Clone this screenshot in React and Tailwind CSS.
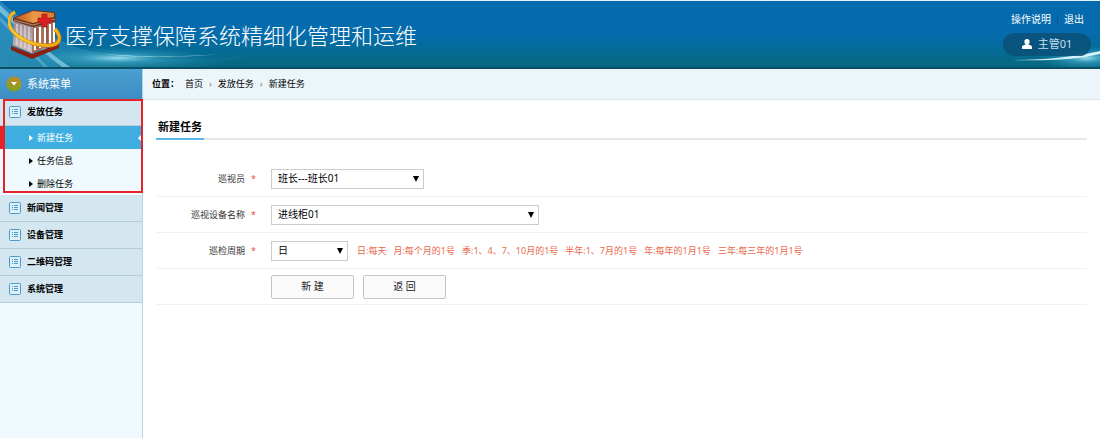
import React, { useState } from 'react';

const menus = [
    { title: '发放任务', children: ['新建任务', '任务信息', '删除任务'] },
    { title: '新闻管理' },
    { title: '设备管理' },
    { title: '二维码管理' },
    { title: '系统管理' }
];

const Logo = () => (
    <svg viewBox="0 0 56 52" className="w-[56px] h-[52px] shrink-0" aria-hidden="true">
        <defs>
            <linearGradient id="roof" x1="0" y1="0" x2="1" y2="0">
                <stop offset="0" stopColor="#b9531c" />
                <stop offset="0.5" stopColor="#ee9a48" />
                <stop offset="1" stopColor="#d97a35" />
            </linearGradient>
            <linearGradient id="wall" x1="0" y1="0" x2="0" y2="1">
                <stop offset="0" stopColor="#9c8a92" />
                <stop offset="1" stopColor="#cfc0c2" />
            </linearGradient>
            <linearGradient id="ring" x1="0" y1="0" x2="1" y2="1">
                <stop offset="0" stopColor="#e5b83a" />
                <stop offset="0.5" stopColor="#fbc926" />
                <stop offset="1" stopColor="#f0a313" />
            </linearGradient>
        </defs>
        {/* base */}
        <path d="M3 38 L24 46 L51 36 V40 L24 51 L3 42 Z" fill="#8a1f12" />
        <path d="M4 37 L24 45 L50 35 L44 32 L8 32 Z" fill="#cf5a34" />
        {/* walls */}
        <path d="M6 13 L25 19 L24 45 L5 37 Z" fill="url(#wall)" />
        <path d="M25 19 L47 13 V35 L24 45 Z" fill="#a8725c" />
        <path d="M9 16 V37 M13 17 V39 M17 18 V40 M21 19 V42" stroke="#e6dcdc" strokeWidth="1.2" />
        <path d="M27 20 V42 M32 19 V40 M37 18 V38 M42 16 V36 M46 15 V34" stroke="#fff" strokeWidth="2" />
        <path d="M29 20 V41 M39 18 V37" stroke="#6c3c34" strokeWidth="0.8" />
        {/* roof */}
        <path d="M5 10 L25 2 L47 4 L48 13 L25 19 L5 13 Z" fill="#6b3420" />
        <path d="M7 10 L25 3 L46 5 L46 9 L25 15 Z" fill="url(#roof)" />
        <path d="M6 12 L25 17 L47 11" fill="none" stroke="#c98a62" strokeWidth="1" />
        <path d="M7 4 C-2 9 -1 20 10 28 C22 37 42 40 49 35 C54 31 50 24 47 21" fill="none" stroke="#b8760c" strokeWidth="4" />
        <path d="M7 4 C-2 9 -1 20 10 28 C22 37 42 40 49 35 C54 31 50 24 47 21" fill="none" stroke="url(#ring)" strokeWidth="3" />
        <path d="M34 6 h5 v4 h4 v5 h-4 v4 h-5 v-4 h-4 v-5 h4 Z" fill="#db1f22" stroke="#9a1414" strokeWidth="0.6" />
    </svg>
);

const HeaderLights = () => (
    <>
        <svg viewBox="0 0 260 66" className="absolute left-0 bottom-0 w-[260px] h-[66px]" aria-hidden="true">
            <defs>
                <radialGradient id="glow">
                    <stop offset="0" stopColor="#a8e9f7" stopOpacity="0.9" />
                    <stop offset="0.4" stopColor="#4cb4d6" stopOpacity="0.5" />
                    <stop offset="1" stopColor="#2b9cc4" stopOpacity="0" />
                </radialGradient>
                <linearGradient id="streak" x1="0" y1="0" x2="1" y2="0">
                    <stop offset="0" stopColor="#fff" stopOpacity="0.1" />
                    <stop offset="0.4" stopColor="#e8fbff" />
                    <stop offset="1" stopColor="#fff" stopOpacity="0" />
                </linearGradient>
                <linearGradient id="haze" x1="0" y1="0" x2="1" y2="0">
                    <stop offset="0" stopColor="#5cb6dc" stopOpacity="0.75" />
                    <stop offset="1" stopColor="#2f9bc8" stopOpacity="0.1" />
                </linearGradient>
            </defs>
            <path d="M0 0 C30 26 70 52 130 58 C180 60 220 58 260 52 L200 66 H0 Z" fill="url(#haze)" opacity="0.5" />
            <path d="M0 8 C20 26 40 48 60 66 H0 Z" fill="#2a8fbd" opacity="0.5" />
            <ellipse cx="118" cy="57" rx="95" ry="11" fill="url(#glow)" />
            <path d="M50 38 C85 55 140 60 250 51 C150 60 90 57 50 38 Z" fill="url(#streak)" />
            <path d="M0 4 C22 24 42 48 70 66 L62 66 C38 48 20 28 0 11 Z" fill="#a5dff2" opacity="0.6" />
            <path d="M0 16 C16 30 30 48 48 66 L44 66 C28 50 14 34 0 20 Z" fill="#a5dff2" opacity="0.3" />
        </svg>
        <svg viewBox="0 0 100 30" className="absolute right-0 bottom-0 w-[100px] h-[30px]" aria-hidden="true">
            <ellipse cx="86" cy="21" rx="48" ry="12" fill="url(#glow)" />
            <path d="M8 23 C40 23 70 21 100 14 V17 C75 23 45 24 8 23 Z" fill="#e8fbff" opacity="0.9" />
        </svg>
    </>
);

const ListIcon = () => (
    <svg viewBox="0 0 12 12" className="w-3 h-3 shrink-0" aria-hidden="true">
        <rect x="0.5" y="0.5" width="11" height="11" rx="1" fill="#e0f0f8" stroke="#4a9cc8" />
        <path d="M3 3.5 H4 M3 5.5 H4 M3 7.5 H4 M5 3.5 H9 M5 5.5 H9 M5 7.5 H9" stroke="#4a9cc8" />
    </svg>
);

const Header = () => (
    <header className="relative overflow-hidden flex items-center justify-between h-[69px] pl-2 pr-[9px] border-t border-b-2 border-t-[#e5f3f8] border-b-[#0b4f66] bg-linear-to-b from-[#0569ae] via-[#056cad] to-[#07697f]">
        <HeaderLights />
        <div className="relative flex items-center gap-px">
            <Logo />
            <h1 className="font-['Noto_Sans_CJK_SC',sans-serif] font-light text-[22px] leading-[30px] text-white">
                医疗支撑保障系统精细化管理和运维
            </h1>
        </div>
        <div className="relative flex flex-col items-end gap-2">
            <nav className="flex items-center gap-[6px] pr-[7px] text-[10px] leading-3 text-white">
                <a href="#help">操作说明</a>
                <span className="w-px h-2 bg-[#0a5590]" />
                <a href="#logout">退出</a>
            </nav>
            <div className="flex items-center justify-center gap-[6px] w-[88px] h-[23px] rounded-full bg-[#0b5078]/85 text-[11px] text-[#c4dfee]">
                <svg viewBox="0 0 10 10" className="w-[10px] h-[10px]" aria-hidden="true">
                    <path d="M5 0 C7 0 7.8 1.4 7.6 3 C7.5 4.2 7 5 6.5 5.6 C6.6 6 10 6 10 8.2 V10 H0 V8.2 C0 6 3.4 6 3.5 5.6 C3 5 2.5 4.2 2.4 3 C2.2 1.4 3 0 5 0 Z" fill="#fff" />
                </svg>
                <span>主管01</span>
            </div>
        </div>
    </header>
);

const Sidebar = ({ active, onSelect }) => (
    <aside className="w-[143px] shrink-0 bg-[#f0f9fd] border-r border-[#b7d5df]">
        <div className="flex items-center gap-[5px] h-[30px] pl-[6px] bg-linear-to-b from-[#4a9fd2] to-[#3d8dc4] text-[11px] text-white">
            <svg viewBox="0 0 16 16" className="w-4 h-4" aria-hidden="true">
                <defs>
                    <linearGradient id="badge" x1="0" y1="0" x2="0" y2="1">
                        <stop offset="0" stopColor="#c08a2c" />
                        <stop offset="1" stopColor="#7fa51c" />
                    </linearGradient>
                </defs>
                <circle cx="8" cy="8" r="7.5" fill="url(#badge)" />
                <path d="M5 6 H11 L8 9.5 Z" fill="#fff" />
            </svg>
            <span>系统菜单</span>
        </div>
        {menus.map((menu) => (
            <div key={menu.title} className="relative">
                <button
                    type="button"
                    className="flex items-center gap-[6px] w-full h-[27px] pl-[9px] border-b border-[#b5cdda] bg-[#d4e7f0] text-[9px] font-bold text-black"
                >
                    <ListIcon />
                    <span>{menu.title}</span>
                </button>
                {menu.children && (
                    <>
                        <ul>
                            {menu.children.map((item) => (
                                <li key={item}>
                                    <a
                                        href="#task"
                                        onClick={() => onSelect(item)}
                                        className={`flex items-center h-[23px] pl-[29px] text-[9px] ${active === item ? 'bg-[#3eafe0] text-white' : 'text-black'}`}
                                    >
                                        <svg viewBox="0 0 4 6" className="w-1 h-[6px] mr-1" aria-hidden="true">
                                            <path d="M0 0 L4 3 L0 6 Z" fill="currentColor" />
                                        </svg>
                                        <span className="flex-1">{item}</span>
                                        {active === item && (
                                            <svg viewBox="0 0 4 8" className="w-1 h-2" aria-hidden="true">
                                                <path d="M4 0 L0 4 L4 8 Z" fill="#fff" />
                                            </svg>
                                        )}
                                    </a>
                                </li>
                            ))}
                        </ul>
                        <div className="absolute left-[3px] -right-px top-0 bottom-[2px] border-2 border-[#e52329] pointer-events-none" />
                        <div className="absolute left-0 top-[27px] w-[3px] h-[23px] bg-[#e52329]" />
                    </>
                )}
            </div>
        ))}
    </aside>
);

const FormRow = ({ id, label, children }) => (
    <div className="flex items-center h-9 border-b border-[#f1f1f1]">
        <div className="flex justify-end gap-[6px] w-[100px] mr-[15px] text-[9px] text-[#333]">
            {label && (
                <>
                    <label htmlFor={id}>{label}</label>
                    <span className="text-[#e8503a]">*</span>
                </>
            )}
        </div>
        {children}
    </div>
);

const Select = ({ id, width, options }) => (
    <div className={`relative ${width}`}>
        <select id={id} className="block w-full h-5 pl-[6px] appearance-none rounded-none border border-[#ccc] bg-white text-[10px] text-black">
            {options.map((option) => (
                <option key={option}>{option}</option>
            ))}
        </select>
        <svg viewBox="0 0 6 6" className="absolute right-[5px] top-[7px] w-[6px] h-[6px] pointer-events-none" aria-hidden="true">
            <path d="M0 0 H6 L3 6 Z" fill="#000" />
        </svg>
    </div>
);

const buttonClass = 'w-[83px] h-6 rounded-xs border border-[#c4c4c4] bg-[#fafafa] text-[10px] text-[#222]';

const TaskForm = () => (
    <form className="px-[13px] pt-4" onSubmit={(e) => e.preventDefault()}>
        <div className="flex border-b-2 border-[#e4e8eb]">
            <h2 className="-mb-[2px] w-12 h-6 text-center text-[11px] leading-[22px] font-bold text-black border-b-2 border-[#5bb8e6]">
                新建任务
            </h2>
        </div>
        <div className="pt-[21px]">
            <FormRow id="inspector" label="巡视员">
                <Select id="inspector" width="w-[153px]" options={['班长---班长01']} />
            </FormRow>
            <FormRow id="device" label="巡视设备名称">
                <Select id="device" width="w-[268px]" options={['进线柜01']} />
            </FormRow>
            <FormRow id="period" label="巡检周期">
                <Select id="period" width="w-[77px]" options={['日', '月', '季', '半年', '年', '三年']} />
                <p className="flex gap-[7px] ml-[9px] text-[9px] text-[#e86a4c]">
                    <span>日:每天</span>
                    <span>月:每个月的1号</span>
                    <span>季:1、4、7、10月的1号</span>
                    <span>半年:1、7月的1号</span>
                    <span>年:每年的1月1号</span>
                    <span>三年:每三年的1月1号</span>
                </p>
            </FormRow>
            <FormRow>
                <div className="flex gap-[9px]">
                    <button type="submit" className={buttonClass}>新 建</button>
                    <button type="button" className={buttonClass}>返 回</button>
                </div>
            </FormRow>
        </div>
    </form>
);

const App = () => {
    const [active, setActive] = useState('新建任务');

    return (
        <div className="flex flex-col min-h-screen bg-white font-['Noto_Sans','Noto_Sans_CJK_SC',sans-serif]">
            <Header />
            <div className="flex flex-1">
                <Sidebar active={active} onSelect={setActive} />
                <main className="flex-1">
                    <nav className="flex items-center h-[31px] pl-[9px] border-b border-[#d8e6f0] bg-[#ecf5fa] text-[9px] text-black">
                        <span className="mr-[6px] font-bold">位置：</span>
                        <ol className="flex items-center gap-[6px]">
                            <li><a href="#home">首页</a></li>
                            <li className="text-[#777]">›</li>
                            <li><a href="#dispatch">发放任务</a></li>
                            <li className="text-[#777]">›</li>
                            <li><a href="#new">新建任务</a></li>
                        </ol>
                    </nav>
                    <TaskForm />
                </main>
            </div>
        </div>
    );
};

export default App;
